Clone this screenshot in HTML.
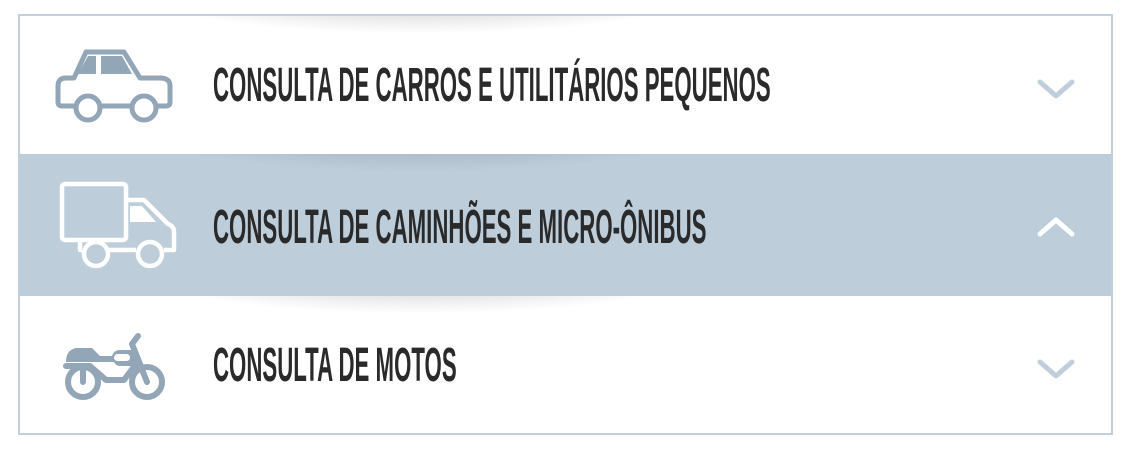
<!DOCTYPE html>
<html><head><style>
body{margin:0;width:1130px;height:452px;background:#fff;overflow:hidden;position:relative;font-family:"Liberation Sans",sans-serif}
.box{position:absolute;left:18px;top:14px;width:1091px;height:417px;border:2px solid #c2d0dc}
.row{position:absolute;left:0;width:1091px;overflow:hidden}
.sh{position:absolute;left:120px;width:560px;height:40px;top:-22px;background:radial-gradient(ellipse at 50% 0%,rgba(0,0,0,.22),rgba(0,0,0,0) 70%)}
.t{position:absolute;left:193px;font-weight:bold;font-size:48px;line-height:56px;color:#2a2a2a;white-space:nowrap;transform:scaleX(.463);transform-origin:0 50%}
svg{position:absolute}
</style></head><body>
<div class="box">
 <div class="row" style="top:0;height:138px;background:#fff">
  <div class="sh"></div>
  <svg style="left:34px;top:30px" width="120" height="80" viewBox="0 0 120 80">
   <g fill="none" stroke="#93a6b7" stroke-width="5" stroke-linejoin="round">
    <path d="M20 60 H8 Q4 60 4 56 V40 Q4 32 12 32 H20 L32 6 H70 L86 32 H106 Q116 32 116 40 V56 Q116 60 112 60 H102"/>
    <path d="M48 60 H78"/>
    <circle cx="34" cy="62" r="12"/><circle cx="90" cy="62" r="12"/>
   </g>
   <path d="M24 28 L34 10 H42 V28Z M47 10 H68 L78 28 H47Z" fill="#93a6b7"/>
  </svg>
  <div class="t" style="top:42px">CONSULTA DE CARROS E UTILITÁRIOS PEQUENOS</div>
  <svg style="left:1016px;top:60px" width="40" height="26"><path d="M4 6 L20 20 L36 6" fill="none" stroke="#c0cedb" stroke-width="5" stroke-linecap="round" stroke-linejoin="round"/></svg>
 </div>
 <div class="row" style="top:138px;height:142px;background:#bdcdda">
  <div class="sh" style="opacity:.8"></div>
  <svg style="left:38px;top:26px" width="122" height="96" viewBox="0 0 122 96">
   <g fill="none" stroke="#fff" stroke-width="4.5" stroke-linejoin="round">
    <rect x="4" y="4" width="64" height="56" rx="3"/>
    <path d="M68 20 H86 L110 44 Q116 46 116 52 V70 H106 M78 70 H50 M22 60 V70 H24"/>
    <circle cx="38" cy="74" r="12"/><circle cx="92" cy="74" r="12"/>
   </g>
   <path d="M72 26 H84 L98 42 H72Z" fill="#fff"/>
  </svg>
  <div class="t" style="top:46px">CONSULTA DE CAMINHÕES E MICRO-ÔNIBUS</div>
  <svg style="left:1016px;top:60px" width="40" height="26"><path d="M4 20 L20 6 L36 20" fill="none" stroke="#fff" stroke-width="5" stroke-linecap="round" stroke-linejoin="round"/></svg>
 </div>
 <div class="row" style="top:280px;height:137px;background:#fff">
  <div class="sh"></div>
  <svg style="left:40px;top:36px" width="110" height="72" viewBox="0 0 110 72">
   <g fill="none" stroke="#93a6b7" stroke-width="6" stroke-linecap="round" stroke-linejoin="round">
    <circle cx="23" cy="50" r="15"/><circle cx="87" cy="50" r="15"/>
    <path d="M23 50 V38 M87 50 L72 12 L78 4"/>
    <path d="M6 34 H30 L46 48 H64 L76 32"/>
   </g>
   <path d="M6 30 Q6 18 16 16 H32 L40 24 H52 Q54 18 60 18 H76 Q80 28 72 34 H60 Q56 34 54 30 H6Z" fill="#93a6b7"/>
   <rect x="54" y="22" width="16" height="7" rx="3.5" fill="#fff"/>
  </svg>
  <div class="t" style="top:42px">CONSULTA DE MOTOS</div>
  <svg style="left:1016px;top:60px" width="40" height="26"><path d="M4 6 L20 20 L36 6" fill="none" stroke="#c0cedb" stroke-width="5" stroke-linecap="round" stroke-linejoin="round"/></svg>
 </div>
</div>
</body></html>
